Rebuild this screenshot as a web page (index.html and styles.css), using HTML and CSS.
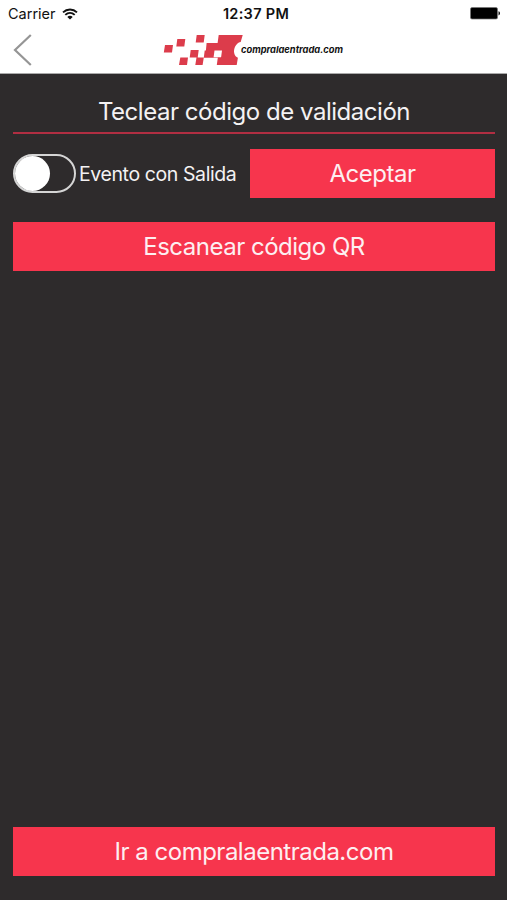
FILE: index.html
```html
<!DOCTYPE html>
<html lang="es">
<head>
<meta charset="utf-8">
<meta name="viewport" content="width=device-width">
<title>compralaentrada.com</title>
<link rel="stylesheet" href="styles.css">
</head>
<body>
<header class="header">
  <div class="status">
    <div class="status-left">
      <span class="carrier">Carrier</span>
      <svg class="wifi" width="16" height="12" viewBox="0 0 16 12" aria-hidden="true">
        <path d="M1 4.400C5 .6 11 .6 15 4.400M3.300 6.900c2.800-2.600 6.600-2.600 9.400 0" fill="none" stroke="#111" stroke-width="1.900"/>
        <path d="M8 11.600 5.300 8.900c1.500-1.400 3.900-1.400 5.400 0z" fill="#111"/>
      </svg>
    </div>
    <span class="clock">12:37 PM</span>
    <svg class="battery" width="31" height="13" viewBox="0 0 31 13" aria-hidden="true">
      <rect x=".5" y=".5" width="27" height="11.500" rx="1.500" fill="#000" stroke="#777" stroke-width=".7"/>
      <path d="M28.500 4.200c2 .6 2 3.600 0 4.200z" fill="#111"/>
    </svg>
  </div>
  <nav class="nav">
    <svg class="back" width="20" height="34" viewBox="0 0 20 34" aria-hidden="true">
      <path d="M17.800 2 2 17l15.800 15" fill="none" stroke="#959595" stroke-width="2.200"/>
    </svg>
    <svg class="logo" width="182" height="34" viewBox="0 0 182 34">
      <g fill="#dc3c4b">
        <path d="M2 12h8l-1 7.500H.8zM14.300 6h8l-1 7.500h-8zM33.700 2h8l-1 7.500h-8zM27.700 17h8l-1 7.500h-8zM17.300 24.500h7.700l-1 7.500h-8zM33.500 24.500h7.300l-1.200 7.500h-7.300z"/>
        <path fill-rule="evenodd" d="M55.700 2h24l-2 7c-6.300 1-9.700 12.500-2.800 15.800L73.700 32H53.800l1-7.300H40.800l.9-7.200h1.200l.7-7.500H54.600zM51.500 17.500l-.9 6.800h7.500l.9-6.800z"/>
      </g>
      <text class="logo-text" x="78" y="20" textLength="102" lengthAdjust="spacingAndGlyphs">compralaentrada.com</text>
    </svg>
  </nav>
</header>
<main class="main">
  <div class="code-field"><span class="t-code">Teclear código de validación</span></div>
  <div class="row">
    <div class="switch"><div class="knob"></div></div>
    <span class="switch-label">Evento con Salida</span>
    <button class="button accept"><span class="t-accept">Aceptar</span></button>
  </div>
  <button class="button scan"><span class="t-scan">Escanear código QR</span></button>
  <button class="button site"><span class="t-site">Ir a compralaentrada.com</span></button>
</main>
</body>
</html>
```
FILE: styles.css
```css
* { box-sizing: border-box; }
body {
  margin: 0;
  height: 900px;
  display: flex;
  flex-direction: column;
  background: #2e2b2c;
  font-family: Inter, "Liberation Sans", sans-serif;
}
.header { height: 74px; background: #fff; border-bottom: 1px solid #aaa; }
.status {
  height: 27px;
  padding: 0 6px 0 8px;
  display: grid;
  grid-template-columns: 1fr auto 1fr;
  align-items: center;
  color: #111;
  font-size: 14.5px;
}
.status-left { display: flex; align-items: center; gap: 6px; }
.clock { padding-left: 3px; font-weight: 600; letter-spacing: 0.3px; }
.battery { justify-self: end; }
.nav { height: 46px; padding: 6px 0 0 13px; display: flex; align-items: flex-start; }
.logo { margin-left: 130px; }
.logo-text { font: italic 700 9.3px Inter, sans-serif; fill: #111; }
.main { flex: 1; display: flex; flex-direction: column; padding: 0 12px 24px 13px; color: #f4f2f3; }
.code-field {
  height: 60px;
  padding: 16px 0 0;
  display: flex;
  justify-content: center;
  align-items: center;
  border-bottom: 2px solid #b12e42;
  font-size: 24px;
  letter-spacing: -0.47px;
}
.row { height: 49px; margin-top: 15px; display: flex; align-items: center; }
.switch { width: 63px; height: 39px; border: 2px solid #d5d5d5; border-radius: 20px; }
.knob { width: 35px; height: 35px; border-radius: 50%; background: #fff; }
.switch-label {
  width: 170px;
  padding: 1px 0 0 3px;
  font-size: 19.5px;
  letter-spacing: -0.4px;
  white-space: nowrap;
}
.button {
  height: 49px;
  border: 0;
  padding: 0;
  background: #f7354d;
  color: #fdeff1;
  font: 400 24px Inter, "Liberation Sans", sans-serif;
  letter-spacing: -0.5px;
}
.accept { width: 245px; margin-left: auto; }
.scan { margin-top: 24px; }
.site { margin-top: auto; }
```
